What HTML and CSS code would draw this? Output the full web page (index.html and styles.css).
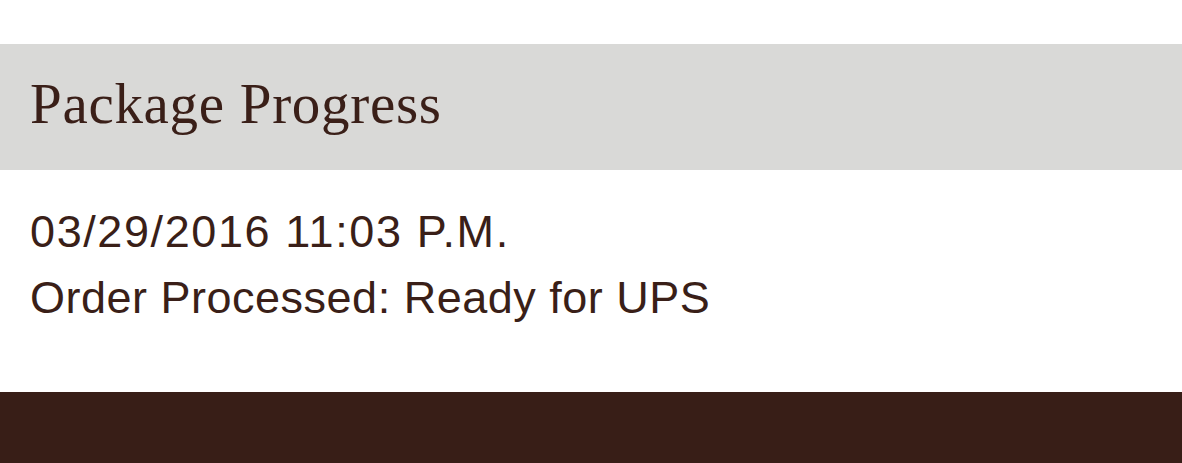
FILE: index.html
```html
<!DOCTYPE html>
<html>
<head>
  <title>Package Progress</title>
  <meta charset="utf-8" />
  <meta name="viewport" content="width=device-width, initial-scale=1.0" />
  <link rel="stylesheet" href="styles.css">
</head>
<body>

<!--Tracking panel-->
<section class="tracking">
  <h2 class="tracking-title">Package Progress</h2>
  <div class="tracking-event">
    <p class="event-time">03/29/2016 11:03 P.M.</p>
    <p class="event-status">Order Processed: Ready for UPS</p>
  </div>
</section>

<footer class="site-footer"></footer>

</body>
</html>
```

FILE: styles.css
```css
body {
  margin: 0;
  padding: 0;
  background: #fff;
  color: #3a1f18;
  font-family: 'Liberation Sans', Arial, sans-serif;
}

h2, p {
  margin: 0;
}

.tracking {
  padding-top: 44px;
}

.tracking-title {
  background: #d9d9d7;
  height: 126px;
  padding: 31px 0 0 30px;
  box-sizing: border-box;
  font-family: 'Liberation Serif', 'Times New Roman', serif;
  font-weight: normal;
  font-size: 57px;
  line-height: 57px;
  letter-spacing: 0.7px;
}

.tracking-event {
  height: 222px;
  box-sizing: border-box;
  padding: 29px 30px 0;
  font-size: 45px;
  line-height: 66px;
}

.event-time {
  letter-spacing: 1.6px;
}

.event-status {
  letter-spacing: 0.5px;
}

.site-footer {
  background: #381e17;
  height: 71px;
}
```
